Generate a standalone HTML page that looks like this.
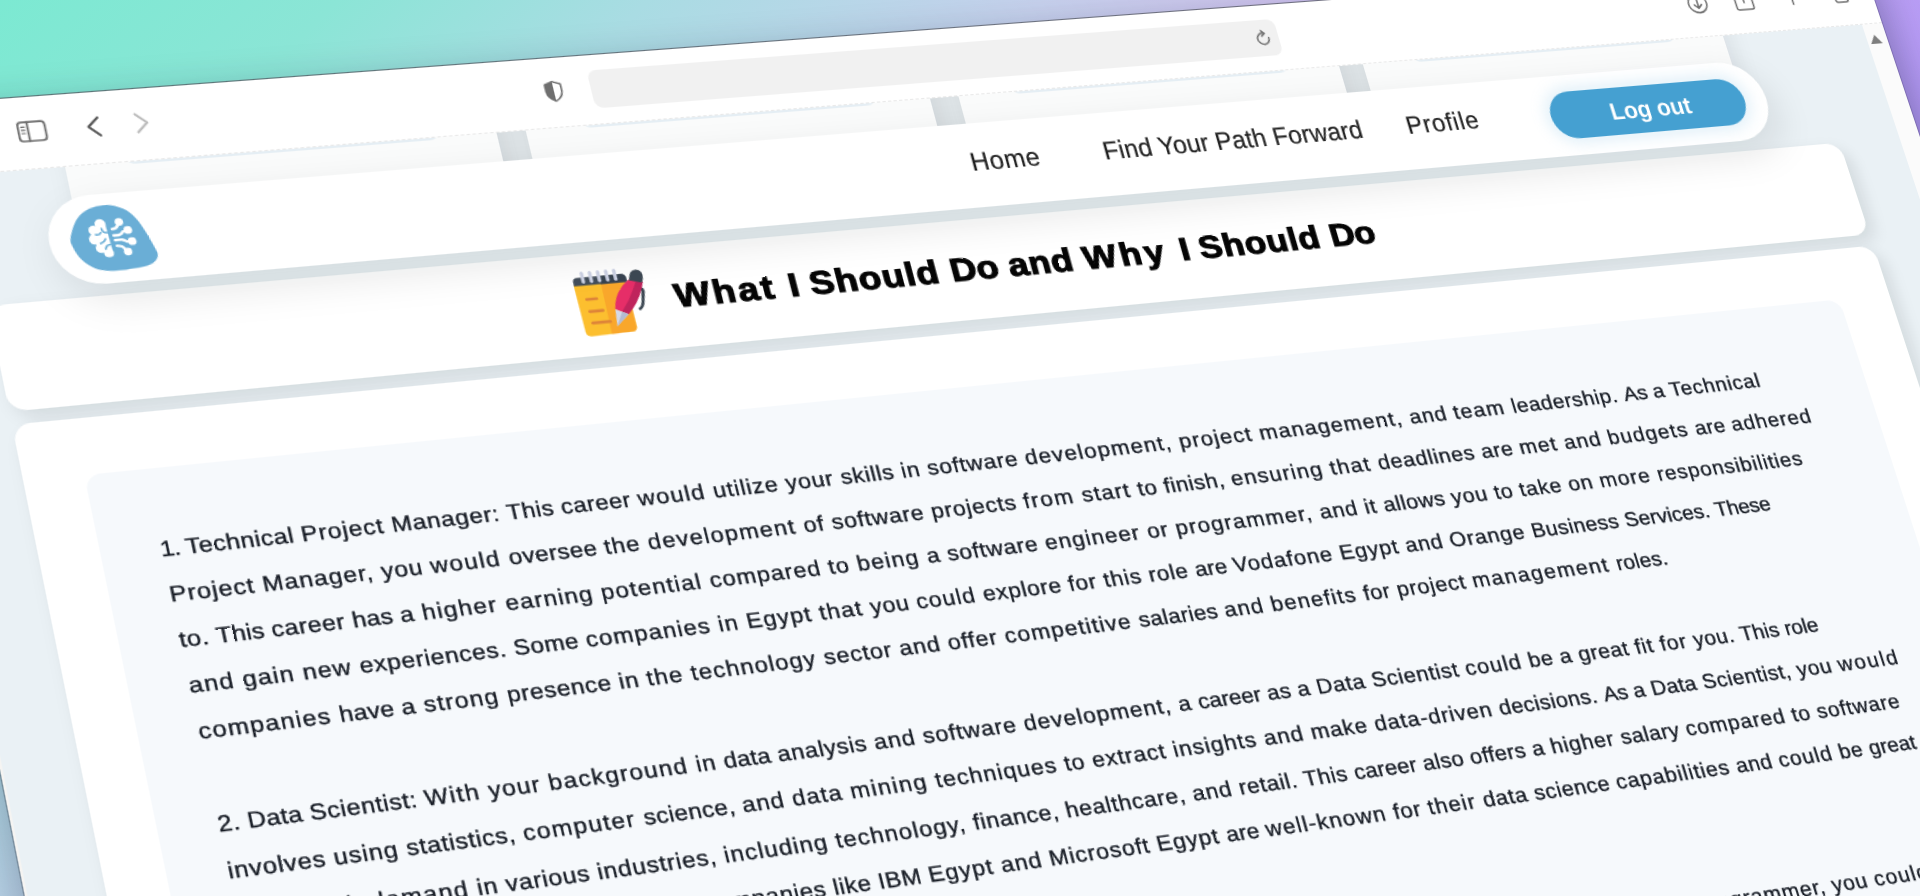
<!DOCTYPE html>
<html lang="en">
<head>
<meta charset="utf-8">
<title>What I Should Do and Why I Should Do</title>
<style>
*{box-sizing:border-box;margin:0;padding:0}
html,body{width:1920px;height:896px;overflow:hidden}
body{position:relative;background:#a9c3d6;font-family:"Liberation Sans",sans-serif}
#bg{position:absolute;left:0;top:0;width:1920px;height:896px;background:linear-gradient(135deg,#7ce9d2 0%,#8be5d6 12%,#a9dce3 23%,#c6d1ed 37%,#d1c6f0 45%,#c0a6f4 60%,#b498f5 72%,#a88af4 100%)}
#win{position:absolute;left:0;top:0;width:1815px;height:1000px;transform-origin:0 0;transform:matrix3d(1.25222472,-0.0846690786,0,8.42117622e-05,0.231718846,1.12282521,0,-7.60264551e-05,0,0,1,0,-127.124716,108.336761,0,1);background:#fff;box-shadow:0 16px 36px 4px rgba(10,25,50,.32)}
#win>*,#page>*{position:absolute}
#ledge{left:-2.4px;top:0;width:2.4px;height:1000px;background:#f5f4f2;box-shadow:-.8px 0 0 rgba(50,60,70,.45)}
#tedge{left:-1px;top:-1.1px;width:1817px;height:1.1px;background:rgba(80,84,92,.75)}
#redge{left:1815px;top:0;width:1px;height:1000px;background:rgba(70,60,110,.3)}
#clip{left:0;top:0;width:1815px;height:1000px;overflow:hidden;background:#fff}
#clip>*{position:absolute}
#toolbar{left:0;top:0;width:1815px;height:63.5px;background:#fff;border-bottom:1px dashed #e9e9e9}
#ticons{left:0;top:0;overflow:visible}
#url{left:589.5px;top:13.6px;width:629px;height:35px;border-radius:8px;background:#f1f1f1}
#page{left:0;top:63.5px;width:1815px;height:936px;background:#eaf1f5;overflow:hidden}
#pg{left:0;top:-63.5px;width:1815px;height:1000px}
#pg>*{position:absolute}
#sb{left:1793.5px;top:63.5px;width:21.5px;height:940px;background:#fbfbfb}
#sb i{position:absolute;left:3.2px;top:11.9px;width:0;height:0;border-left:6.6px solid transparent;border-right:6.6px solid transparent;border-bottom:9.2px solid #7e7e7e}
#rowsh{left:150px;top:40px;width:1490px;height:90px;background:#e0e6e9}
.rc{top:10px;height:130px;width:358.5px;background:#fafbfb;border-radius:14px;box-shadow:5px 4px 22px 0 rgba(10,16,20,.08)}
.rc u{position:absolute;left:48px;right:48px;top:0;height:56.4px;border-radius:0 0 9px 9px;background:#e5eef4;text-decoration:none}
#nav{left:117.3px;top:90.3px;width:1556.2px;height:77.7px;border-radius:39px;background:#fff;box-shadow:6px 13px 36px rgba(10,16,20,.1)}
#logo{left:0;top:0;overflow:visible}
#btn{left:1455.5px;top:105.5px;width:195.1px;height:46.5px;border-radius:23.25px;background:#45a0d1;box-shadow:0 0 14px 5px rgba(222,238,248,.85)}
.card{left:59px;width:1673px;background:#fff;border-radius:15px;box-shadow:6px 7px 16px 0 rgba(10,16,20,.1)}
#tcard{top:178px;height:91px}
#ccard{top:280px;height:760px}
#inner{left:106.7px;top:328px;width:1574.5px;height:760px;border-radius:13px;background:#f6f9fc}
#note{left:0;top:0;overflow:visible}
.t{position:absolute;white-space:nowrap;line-height:0;transform-origin:0 0;font-weight:normal}
.t i{display:inline-block;width:0;height:40px;vertical-align:baseline}
.bt{color:#151a23;-webkit-text-stroke:.3px #151a23}
.nt{color:#222;-webkit-text-stroke:.2px #222}
.bn{color:#fff;font-weight:bold}
.tt{color:#050505;font-weight:bold;-webkit-text-stroke:1px #050505}
</style>
</head>
<body>
<div id="bg"></div>
<div id="win">
<div id="ledge"></div><div id="tedge"></div><div id="redge"></div>
<div id="clip">
 <div id="page">
  <div id="pg">
   <div id="rowsh"></div>
   <div class="rc" style="left:142px"><u></u></div>
   <div class="rc" style="left:525.5px"><u></u></div>
   <div class="rc" style="left:909.5px"><u></u></div>
   <div class="rc" style="left:1291px"><u></u></div>
   <div class="card" id="tcard"></div>
   <div class="card" id="ccard"></div>
   <div id="inner"></div>
   <svg id="note" width="1" height="1">
    <g>
     <path d="M535 205.5H579.3L579.6 246.5Q579.6 250.6 575.6 250.7L540 251.7Q535.8 251.8 535.7 247.6Z" fill="#fcbf2f"/>
     <path d="M558.3 205.5H579.3L579.6 246.5Q579.6 250.6 575.6 250.7L557.4 251.2Z" fill="#f9a72b"/>
     <path d="M535.2 206.6V203Q535.2 199.3 539 199.2H576.6Q580.6 199.2 580.6 203V206.6Z" fill="#434e5b"/>
     <path d="M558 206.6V199.2H576.6Q580.6 199.2 580.6 203V206.6Z" fill="#384350"/>
     <g stroke="#cdd2e4" stroke-width="3" stroke-linecap="round">
      <path d="M543.9 195.6V203.2"/><path d="M550.9 195.6V203.2"/><path d="M557.8 195.6V203.2"/><path d="M564.8 195.6V203.2"/><path d="M571.7 195.6V203.2"/>
     </g>
     <g stroke="#de8538" stroke-width="2.7" stroke-linecap="round">
      <path d="M543.2 219H551.6"/><path d="M543.4 229.8H554.6"/><path d="M543.7 240.2H558.4"/>
     </g>
     <path d="M589.5 211.5Q594.6 212 593.4 217.5L591.2 226Q590.6 230 586 233L584.6 231.2Q588.3 228.6 588.8 225.4L590.6 217Q591 214.2 588.6 214Z" fill="#3d4853"/>
     <path d="M582.3 204.8L593.8 207.8Q588 224 575.4 235.2L565.2 229.8Q568 214 582.3 204.8Z" fill="#e62e68"/>
     <path d="M588.2 206.3L593.8 207.8Q588 224 575.4 235.2L570.4 232.6Q581 221 588.2 206.3Z" fill="#bf245c"/>
     <path d="M583.2 203.6Q584.6 196.2 590.8 196.6Q596.6 198 594.6 205.2L593.2 208.4L582.4 205.6Z" fill="#3d4853"/>
     <path d="M565.2 229.8L575.4 235.2L563.5 245Z" fill="#d5dae8"/>
     <path d="M570.4 232.6L575.4 235.2L563.5 245Z" fill="#b4bbd0"/>
    </g>
   </svg>
   <h1 class="t tt" id="h1" style="left:618.30px;top:193.40px;font-size:29.5px;letter-spacing:0.0000px;transform:scaleX(1.1)"><i></i><span style="letter-spacing:1.978px">What </span><span style="letter-spacing:0.259px">I </span><span style="letter-spacing:0.836px">Should </span><span style="letter-spacing:0.009px">Do </span><span style="letter-spacing:0.430px">and </span><span style="letter-spacing:2.634px">Why </span><span style="letter-spacing:-0.060px">I </span><span style="letter-spacing:0.589px">Should </span><span style="letter-spacing:-0.500px">Do</span></h1>
   <div id="text">
<div class="t bt" id="l0" style="left:153.70px;top:362.10px;font-size:18.3px;letter-spacing:0.0000px;transform:scaleX(1.09)"><i></i><span style="letter-spacing:-0.599px">1. </span><span style="letter-spacing:0.368px">Technical </span><span style="letter-spacing:0.692px">Project </span><span style="letter-spacing:0.559px">Manager: </span><span style="letter-spacing:0.353px">This </span><span style="letter-spacing:0.369px">career </span><span style="letter-spacing:0.993px">would </span><span style="letter-spacing:0.687px">utilize </span><span style="letter-spacing:0.648px">your </span><span style="letter-spacing:0.540px">skills </span><span style="letter-spacing:0.628px">in </span><span style="letter-spacing:0.618px">software </span><span style="letter-spacing:1.013px">development, </span><span style="letter-spacing:0.994px">project </span><span style="letter-spacing:1.013px">management, </span><span style="letter-spacing:0.698px">and </span><span style="letter-spacing:1.096px">team </span><span style="letter-spacing:0.426px">leadership. </span><span style="letter-spacing:-0.062px">As </span><span style="letter-spacing:0.062px">a </span><span style="letter-spacing:0.663px">Technical</span></div>
<div class="t bt" id="l1" style="left:153.70px;top:400.15px;font-size:18.3px;letter-spacing:0.0000px;transform:scaleX(1.09)"><i></i><span style="letter-spacing:0.736px">Project </span><span style="letter-spacing:0.741px">Manager, </span><span style="letter-spacing:0.567px">you </span><span style="letter-spacing:1.077px">would </span><span style="letter-spacing:0.381px">oversee </span><span style="letter-spacing:0.789px">the </span><span style="letter-spacing:1.033px">development </span><span style="letter-spacing:0.697px">of </span><span style="letter-spacing:0.619px">software </span><span style="letter-spacing:0.665px">projects </span><span style="letter-spacing:1.257px">from </span><span style="letter-spacing:0.945px">start </span><span style="letter-spacing:0.530px">to </span><span style="letter-spacing:0.424px">finish, </span><span style="letter-spacing:1.000px">ensuring </span><span style="letter-spacing:1.113px">that </span><span style="letter-spacing:0.638px">deadlines </span><span style="letter-spacing:0.509px">are </span><span style="letter-spacing:0.944px">met </span><span style="letter-spacing:0.860px">and </span><span style="letter-spacing:1.005px">budgets </span><span style="letter-spacing:0.370px">are </span><span style="letter-spacing:0.891px">adhered</span></div>
<div class="t bt" id="l2" style="left:153.70px;top:438.20px;font-size:18.3px;letter-spacing:0.0000px;transform:scaleX(1.09)"><i></i><span style="letter-spacing:0.397px">to. </span><span style="letter-spacing:0.102px">This </span><span style="letter-spacing:0.421px">career </span><span style="letter-spacing:0.216px">has </span><span style="letter-spacing:0.589px">a </span><span style="letter-spacing:0.990px">higher </span><span style="letter-spacing:0.846px">earning </span><span style="letter-spacing:1.003px">potential </span><span style="letter-spacing:0.769px">compared </span><span style="letter-spacing:0.835px">to </span><span style="letter-spacing:0.992px">being </span><span style="letter-spacing:0.586px">a </span><span style="letter-spacing:0.589px">software </span><span style="letter-spacing:0.889px">engineer </span><span style="letter-spacing:0.750px">or </span><span style="letter-spacing:1.058px">programmer, </span><span style="letter-spacing:0.677px">and </span><span style="letter-spacing:0.704px">it </span><span style="letter-spacing:0.384px">allows </span><span style="letter-spacing:0.726px">you </span><span style="letter-spacing:0.583px">to </span><span style="letter-spacing:0.667px">take </span><span style="letter-spacing:0.733px">on </span><span style="letter-spacing:0.956px">more </span><span style="letter-spacing:0.735px">responsibilities</span></div>
<div class="t bt" id="l3" style="left:153.70px;top:476.25px;font-size:18.3px;letter-spacing:0.0000px;transform:scaleX(1.09)"><i></i><span style="letter-spacing:0.847px">and </span><span style="letter-spacing:0.873px">gain </span><span style="letter-spacing:0.817px">new </span><span style="letter-spacing:0.505px">experiences. </span><span style="letter-spacing:0.384px">Some </span><span style="letter-spacing:0.849px">companies </span><span style="letter-spacing:0.939px">in </span><span style="letter-spacing:0.889px">Egypt </span><span style="letter-spacing:0.957px">that </span><span style="letter-spacing:0.527px">you </span><span style="letter-spacing:0.807px">could </span><span style="letter-spacing:0.554px">explore </span><span style="letter-spacing:0.629px">for </span><span style="letter-spacing:0.719px">this </span><span style="letter-spacing:0.571px">role </span><span style="letter-spacing:0.120px">are </span><span style="letter-spacing:0.838px">Vodafone </span><span style="letter-spacing:0.717px">Egypt </span><span style="letter-spacing:0.648px">and </span><span style="letter-spacing:0.751px">Orange </span><span style="letter-spacing:0.326px">Business </span><span style="letter-spacing:0.055px">Services. </span><span style="letter-spacing:-0.261px">These</span></div>
<div class="t bt" id="l4" style="left:153.70px;top:514.30px;font-size:18.3px;letter-spacing:0.0000px;transform:scaleX(1.09)"><i></i><span style="letter-spacing:0.912px">companies </span><span style="letter-spacing:0.206px">have </span><span style="letter-spacing:0.676px">a </span><span style="letter-spacing:0.923px">strong </span><span style="letter-spacing:0.493px">presence </span><span style="letter-spacing:0.699px">in </span><span style="letter-spacing:0.888px">the </span><span style="letter-spacing:0.920px">technology </span><span style="letter-spacing:0.683px">sector </span><span style="letter-spacing:0.781px">and </span><span style="letter-spacing:0.749px">offer </span><span style="letter-spacing:0.973px">competitive </span><span style="letter-spacing:0.308px">salaries </span><span style="letter-spacing:0.869px">and </span><span style="letter-spacing:1.024px">benefits </span><span style="letter-spacing:0.487px">for </span><span style="letter-spacing:0.611px">project </span><span style="letter-spacing:1.284px">management </span><span style="letter-spacing:0.087px">roles.</span></div>
<div class="t bt" id="l6" style="left:153.70px;top:590.40px;font-size:18.3px;letter-spacing:0.0000px;transform:scaleX(1.09)"><i></i><span style="letter-spacing:0.353px">2. </span><span style="letter-spacing:0.259px">Data </span><span style="letter-spacing:0.451px">Scientist: </span><span style="letter-spacing:1.140px">With </span><span style="letter-spacing:0.852px">your </span><span style="letter-spacing:1.026px">background </span><span style="letter-spacing:0.649px">in </span><span style="letter-spacing:0.180px">data </span><span style="letter-spacing:0.477px">analysis </span><span style="letter-spacing:0.764px">and </span><span style="letter-spacing:0.702px">software </span><span style="letter-spacing:0.834px">development, </span><span style="letter-spacing:0.509px">a </span><span style="letter-spacing:0.035px">career </span><span style="letter-spacing:0.305px">as </span><span style="letter-spacing:0.443px">a </span><span style="letter-spacing:0.544px">Data </span><span style="letter-spacing:0.546px">Scientist </span><span style="letter-spacing:0.957px">could </span><span style="letter-spacing:0.528px">be </span><span style="letter-spacing:0.514px">a </span><span style="letter-spacing:0.481px">great </span><span style="letter-spacing:0.699px">fit </span><span style="letter-spacing:0.789px">for </span><span style="letter-spacing:0.412px">you. </span><span style="letter-spacing:0.039px">This </span><span style="letter-spacing:-0.135px">role</span></div>
<div class="t bt" id="l7" style="left:153.70px;top:628.45px;font-size:18.3px;letter-spacing:0.0000px;transform:scaleX(1.09)"><i></i><span style="letter-spacing:0.593px">involves </span><span style="letter-spacing:0.712px">using </span><span style="letter-spacing:0.507px">statistics, </span><span style="letter-spacing:1.054px">computer </span><span style="letter-spacing:0.336px">science, </span><span style="letter-spacing:0.757px">and </span><span style="letter-spacing:0.915px">data </span><span style="letter-spacing:1.135px">mining </span><span style="letter-spacing:0.860px">techniques </span><span style="letter-spacing:0.682px">to </span><span style="letter-spacing:0.743px">extract </span><span style="letter-spacing:0.866px">insights </span><span style="letter-spacing:0.876px">and </span><span style="letter-spacing:0.710px">make </span><span style="letter-spacing:0.788px">data-driven </span><span style="letter-spacing:0.367px">decisions. </span><span style="letter-spacing:-0.130px">As </span><span style="letter-spacing:0.221px">a </span><span style="letter-spacing:0.318px">Data </span><span style="letter-spacing:0.455px">Scientist, </span><span style="letter-spacing:0.616px">you </span><span style="letter-spacing:1.496px">would</span></div>
<div class="t bt" id="l8" style="left:153.70px;top:666.50px;font-size:18.3px;letter-spacing:0.0000px;transform:scaleX(1.09)"><i></i><span style="letter-spacing:0.800px">be </span><span style="letter-spacing:1.596px">in </span><span style="letter-spacing:0.837px">high </span><span style="letter-spacing:0.991px">demand </span><span style="letter-spacing:0.626px">in </span><span style="letter-spacing:0.535px">various </span><span style="letter-spacing:0.631px">industries, </span><span style="letter-spacing:0.880px">including </span><span style="letter-spacing:0.896px">technology, </span><span style="letter-spacing:0.503px">finance, </span><span style="letter-spacing:0.592px">healthcare, </span><span style="letter-spacing:0.666px">and </span><span style="letter-spacing:0.492px">retail. </span><span style="letter-spacing:0.453px">This </span><span style="letter-spacing:0.130px">career </span><span style="letter-spacing:0.274px">also </span><span style="letter-spacing:0.386px">offers </span><span style="letter-spacing:0.440px">a </span><span style="letter-spacing:0.675px">higher </span><span style="letter-spacing:0.442px">salary </span><span style="letter-spacing:0.859px">compared </span><span style="letter-spacing:0.703px">to </span><span style="letter-spacing:0.731px">software</span></div>
<div class="t bt" id="l9" style="left:137.17px;top:704.55px;font-size:18.3px;letter-spacing:0.0000px;transform:scaleX(1.09)"><i></i><span style="letter-spacing:0.525px">engineering </span><span style="letter-spacing:0.520px">and </span><span style="letter-spacing:0.524px">programming. </span><span style="letter-spacing:0.530px">In </span><span style="letter-spacing:0.525px">Egypt, </span><span style="letter-spacing:0.519px">companies </span><span style="letter-spacing:0.485px">like </span><span style="letter-spacing:0.410px">IBM </span><span style="letter-spacing:0.863px">Egypt </span><span style="letter-spacing:0.715px">and </span><span style="letter-spacing:0.729px">Microsoft </span><span style="letter-spacing:0.783px">Egypt </span><span style="letter-spacing:0.214px">are </span><span style="letter-spacing:0.973px">well-known </span><span style="letter-spacing:0.659px">for </span><span style="letter-spacing:0.993px">their </span><span style="letter-spacing:0.591px">data </span><span style="letter-spacing:0.446px">science </span><span style="letter-spacing:0.734px">capabilities </span><span style="letter-spacing:0.519px">and </span><span style="letter-spacing:0.871px">could </span><span style="letter-spacing:0.503px">be </span><span style="letter-spacing:0.100px">great</span></div>
<div class="t bt" id="l12" style="left:153.70px;top:818.70px;font-size:18.3px;letter-spacing:0.0000px;transform:scaleX(1.09)"><i></i><span style="letter-spacing:0.865px">3. </span><span style="letter-spacing:0.631px">Software </span><span style="letter-spacing:0.747px">Architect: </span><span style="letter-spacing:0.743px">With </span><span style="letter-spacing:0.745px">your </span><span style="letter-spacing:0.744px">experience </span><span style="letter-spacing:0.745px">in </span><span style="letter-spacing:0.745px">software </span><span style="letter-spacing:0.743px">development </span><span style="letter-spacing:2.263px">and </span><span style="letter-spacing:0.745px">your </span><span style="letter-spacing:0.745px">strong </span><span style="letter-spacing:0.743px">background </span><span style="letter-spacing:0.742px">as </span><span style="letter-spacing:0.751px">a </span><span style="letter-spacing:0.744px">software </span><span style="letter-spacing:0.743px">engineer </span><span style="letter-spacing:0.747px">and </span><span style="letter-spacing:0.742px">programmer, </span><span style="letter-spacing:0.728px">you </span><span style="letter-spacing:1.092px">could</span></div>
   </div>
   <nav id="nav"></nav>
   <svg id="logo" width="1" height="1">
    <path fill="#6aaed6" d="M134.8 125.8C136.1 121.8 139.5 114.2 142.7 110.3C145.9 106.3 149.9 103.8 154.2 102.1C158.5 100.4 163.8 99.7 168.4 100.1C173.0 100.5 177.9 102.4 181.5 104.6C185.1 106.8 187.4 110.0 189.7 113.5C192.0 117.0 193.7 121.6 195.3 125.9C197.0 130.2 198.6 135.8 199.6 139.3C200.6 142.8 201.5 144.7 201.1 147.0C200.7 149.3 199.0 151.6 196.9 153.1C194.8 154.6 192.4 155.4 188.4 156.1C184.4 156.8 177.9 157.2 173.2 157.4C168.5 157.6 164.4 157.8 160.4 157.2C156.4 156.6 152.6 155.9 149.2 154.0C145.8 152.1 142.2 148.9 139.9 145.6C137.6 142.3 135.9 137.7 135.1 134.4C134.2 131.1 133.5 129.8 134.8 125.8Z"/>
    <g transform="translate(148.6 110.6)">
     <g fill="#fff">
      <circle cx="11.6" cy="5.4" r="4.3"/><circle cx="5.6" cy="10.6" r="4.2"/><circle cx="5" cy="18.4" r="4.6"/><circle cx="8.6" cy="26.4" r="4.3"/><circle cx="14" cy="31" r="3.9"/>
      <path d="M8 4H15.6L17.6 33.6H11Z"/>
      <path d="M4 9H13V28H6Z"/>
     </g>
     <g fill="none" stroke="#6aaed6" stroke-width="1.5" stroke-linecap="round">
      <path d="M6.4 14.4Q9.6 15.2 10.8 13"/><path d="M12 9.4Q12 13.6 16 13.4"/><path d="M9 22.4Q12.4 21.4 13.6 18.8"/><path d="M12.2 27.6Q12.6 24.2 16.6 23.8"/>
     </g>
     <g fill="none" stroke="#fff" stroke-width="2.3" stroke-linecap="round" stroke-linejoin="round">
      <path d="M20.4 10.8Q24.4 10.6 25.6 7.4"/><path d="M20.6 16.4H24.6Q27 16.2 28.4 13.8L31.4 13"/><path d="M21 20.6H26.4Q28.6 21.2 30 22.4L33 22.6"/><path d="M21.6 25.6Q26.6 25.8 27.6 29.4"/>
     </g>
     <g fill="#fff"><circle cx="27" cy="5" r="3.4"/><circle cx="32.8" cy="12.6" r="3.4"/><circle cx="34.4" cy="22.6" r="3.4"/><circle cx="29.4" cy="31.2" r="3.4"/></g>
    </g>
   </svg>
   <div id="btn" role="button"></div>
<a class="t nt" id="n1" style="left:904.64px;top:94.40px;font-size:24px;letter-spacing:0.4983px;transform:scaleX(0.96)"><i></i>Home</a>
<a class="t nt" id="n2" style="left:1026.64px;top:94.40px;font-size:24px;letter-spacing:0.1430px;transform:scaleX(0.96)"><i></i>Find Your Path Forward</a>
<a class="t nt" id="n3" style="left:1315.44px;top:94.40px;font-size:24px;letter-spacing:0.7964px;transform:scaleX(0.96)"><i></i>Profile</a>
<div class="t bn" id="n4" style="left:1514.53px;top:97.00px;font-size:23px;letter-spacing:-0.1422px;transform:scaleX(0.97)"><i></i>Log out</div>
  </div>
 </div>
 <div id="sb"><i></i></div>
 <div id="toolbar"></div>
 <div id="url"></div>
 <svg id="ticons" width="1" height="1" fill="none" stroke-linecap="round" stroke-linejoin="round">
  <g stroke="#6f6f6f" stroke-width="1.7">
   <rect x="110.8" y="22.2" width="21.8" height="16.8" rx="3"/>
   <path d="M118.6 22.4V38.8"/>
   <path d="M113.4 26.4H116M113.4 29.2H116M113.4 32H116" stroke-width="1.2"/>
   <path d="M176 22.8L167.4 30.5L176 38.8" stroke="#555" stroke-width="2"/>
   <path d="M206.6 22.4L215.2 30.5L206.6 38.6" stroke="#bcbcbc" stroke-width="2"/>
   <path d="M558 21.6L564.8 24.2V30.4Q564.6 36.4 558 39.6Q551.4 36.4 551.2 30.4V24.2Z" stroke-width="1.5"/>
   <path d="M558 21.6V39.6Q551.4 36.4 551.2 30.4V24.2Z" fill="#6f6f6f" stroke="none"/>
   <path d="M1209.6 31.4A5.4 5.4 0 1 1 1205.6 27" stroke-width="1.5"/>
   <path d="M1203.6 24.4L1206.6 27.2L1203.4 29.6" stroke-width="1.5"/>
   <circle cx="1635" cy="30.4" r="9.2" stroke-width="1.6"/>
   <path d="M1635 25.4V35M1631.4 31.6L1635 35.2L1638.6 31.6" stroke-width="1.6"/>
   <path d="M1678 27H1675.4Q1673.4 27 1673.4 29V38Q1673.4 40 1675.4 40H1688.6Q1690.6 40 1690.6 38V29Q1690.6 27 1688.6 27H1686" stroke-width="1.6"/>
   <path d="M1682 20V33M1678.6 23L1682 19.6L1685.4 23" stroke-width="1.6"/>
   <path d="M1731.5 22.5V38.5M1723.5 30.5H1739.5" stroke-width="1.6"/>
   <rect x="1775.6" y="27.4" width="12.6" height="12.6" rx="2.4" stroke-width="1.6"/>
   <path d="M1779.4 24.6V24.4Q1779.4 22.4 1781.4 22.4H1790Q1792 22.4 1792 24.4V33Q1792 35 1790 35" stroke-width="1.6"/>
  </g>
 </svg>
</div>
</div>
</body>
</html>
